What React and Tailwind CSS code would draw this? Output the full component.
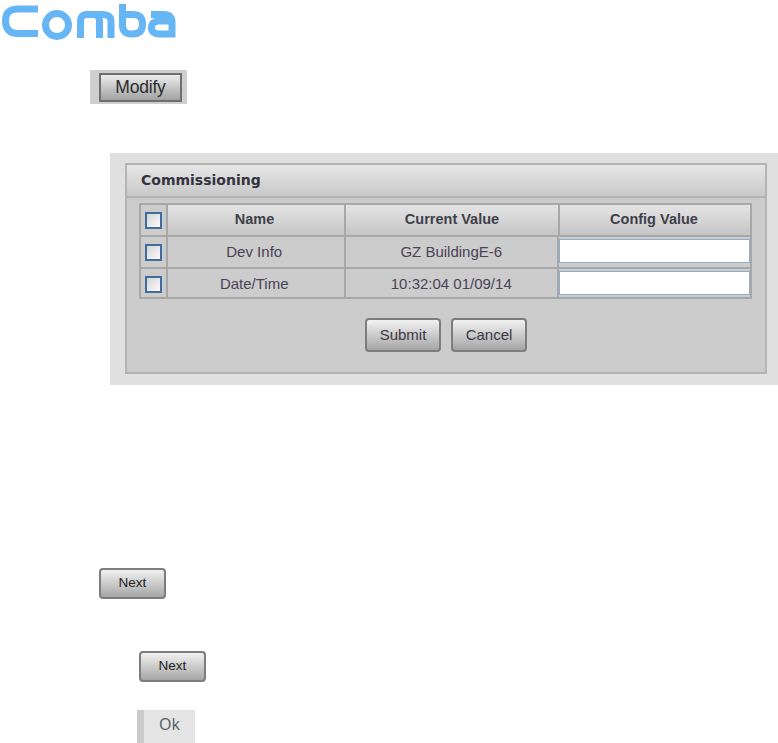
import React from "react";

const arial = "font-['Liberation_Sans',Arial,sans-serif]";

// logo is a drawing, strokes only
const Logo = () => (
  <svg width="178" height="40" viewBox="0 0 178 40" className="block" fill="none" stroke="#66b5f5" strokeWidth="7">
    <path d="M38 9H18C9 9 5.500 13.500 5.500 21S9 33.500 18 33.500H38" />
    <circle cx="57" cy="25" r="11.500" />
    <path d="M80.500 38V21c0-4 2-6.500 6-6.500h7c4 0 6 2.500 6 6.500v17M93 14.500h10c5 0 8 2.500 8 6.500v17" />
    <path d="M122.500 4v21c0 6 3 9 8 9h2c7 0 10-3.500 10-10 0-6.500-3-9.500-10-9.500h-10" />
    <path d="M151 14.500h13c5 0 8 2.500 8 7.500v12h-13c-5 0-7.500-2.500-7.500-6.500s2.500-6.500 7.500-6.500h13" />
  </svg>
);

const GreyButton = ({ label, className }) => (
  <button className={`flex items-center justify-center rounded-[4px] border-2 border-[#7d7d7d] bg-gradient-to-b from-[#f2f2f2] to-[#a6a6a6] ${className}`}>
    {label}
  </button>
);

const Check = () => (
  <span className="block h-[17px] w-[17px] border-2 border-[#3f6d9f] bg-gradient-to-br from-[#d4d6d4] to-[#fafafa]" />
);

const Cell = ({ w, head, children }) => (
  <div className={`flex h-full items-center justify-center border-r-2 border-[#a8a8a8] last:border-r-0 ${w} ${head ? "bg-gradient-to-b from-[#e4e4e4] to-[#c6c6c6] text-[14.500px] font-bold text-[#3f3f4a]" : "text-[15px] text-[#4b4258]"}`}>
    {children}
  </div>
);

const Row = ({ head, name, current, input }) => (
  <div className={`flex h-[32px] border-b-2 border-[#a8a8a8] last:h-[30px] last:border-b-0 ${arial}`}>
    <Cell w="w-[27px]"><Check /></Cell>
    <Cell w="w-[178px] pr-[3px]" head={head}>{name}</Cell>
    <Cell w="w-[214px]" head={head}>{current}</Cell>
    <Cell w={input ? "flex-1" : "flex-1 pr-[2px]"} head={head}>
      {input ? (
        <div className="mb-[3px] h-[24px] w-[191px] border border-[#8fadcc] bg-white" />
      ) : (
        "Config Value"
      )}
    </Cell>
  </div>
);

export default function App() {
  return (
    <div className="h-[743px] w-[778px] overflow-hidden bg-white">
      <Logo />

      {/* Modify */}
      <div className="ml-[90px] mt-[30px] flex h-[34px] w-[97px] items-center bg-[#cfcfcf] pl-[9px]">
        <GreyButton
          label="Modify"
          className={`h-[29px] w-[83px] !rounded-none !border-[#6e6e6e] !from-[#ececec] !to-[#a2a2a2] text-[17.500px] tracking-[-0.2px] text-[#2c2c2c] ${arial}`}
        />
      </div>

      {/* screenshot of the commissioning panel */}
      <div className="ml-[110px] mt-[49px] h-[232px] w-[668px] bg-[#e0e0e0] pl-[15px] pr-[11px] pt-[10px]">
        <div className="h-[211px] border-2 border-[#b4b4b4] bg-[#cccccc]">
          <div className="flex h-[33px] items-center border-b-2 border-[#b4b4b4] bg-gradient-to-b from-[#e6e6e6] to-[#c9c9c9] pl-[14px] font-['DejaVu_Sans',sans-serif] text-[14px] font-bold text-[#33323f]">
            Commissioning
          </div>
          <div className="ml-[12px] mt-[5px] h-[96px] w-[613px] border-2 border-[#a8a8a8]">
            <Row head name="Name" current="Current Value" />
            <Row name="Dev Info" current="GZ BuildingE-6" input />
            <Row name="Date/Time" current="10:32:04 01/09/14" input />
          </div>
          <div className={`ml-[238px] mt-[19px] flex gap-[10px] text-[15px] text-[#3d3646] ${arial}`}>
            <GreyButton label="Submit" className="h-[34px] w-[76px]" />
            <GreyButton label="Cancel" className="h-[34px] w-[76px]" />
          </div>
        </div>
      </div>

      <GreyButton
        label="Next"
        className={`ml-[99px] mt-[183px] h-[31px] w-[67px] text-[13.500px] text-[#222] ${arial}`}
      />
      <GreyButton
        label="Next"
        className={`ml-[139px] mt-[52px] h-[31px] w-[67px] text-[13.500px] text-[#222] ${arial}`}
      />

      {/* Ok */}
      <div className="ml-[137px] mt-[28px] flex h-[33px] w-[58px] bg-[#e4e4e4]">
        <div className="w-[7px] bg-[#cbcbcb]" />
        <div className="flex flex-1 justify-center pt-[2px] font-['Open_Sans',sans-serif] text-[16px] text-[#4f5a66]">
          Ok
        </div>
      </div>
    </div>
  );
}
